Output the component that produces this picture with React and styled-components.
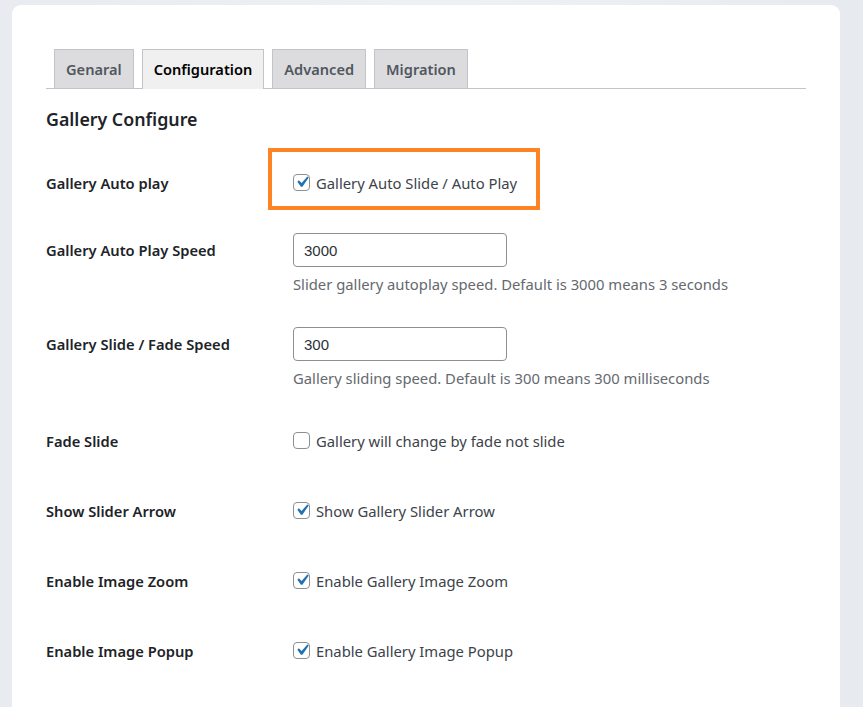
import React from 'react'
import styled, { createGlobalStyle } from 'styled-components'

const GlobalStyle = createGlobalStyle`
  html, body {
    margin: 0;
    padding: 0;
  }
  body {
    background: linear-gradient(90deg, #e8ebef 0%, #eef1f4 50%, #e7ebf0 100%);
    font-family: "Noto Sans", "Open Sans", sans-serif;
    color: #1d2327;
    height: 707px;
    overflow: hidden;
  }
`;

const Card = styled.div`
  margin: 5px 23px 0 12px;
  background: #fff;
  border-radius: 9px 9px 0 0;
  padding: 44px 34px 10px;
  height: 702px;
  box-sizing: border-box;
`;

const TabBar = styled.nav`
  display: flex;
  gap: 8px;
  padding-left: 8px;
  border-bottom: 1px solid #c3c4c7;
`;

const Tab = styled.a`
  display: block;
  padding: 7px 11px 7px;
  font-size: 14.6px;
  font-weight: 600;
  line-height: 24px;
  border: 1px solid #c3c4c7;
  border-bottom: none;
  margin-bottom: ${p => (p.$active ? '-1px' : '0')};
  padding-bottom: ${p => (p.$active ? '8px' : '7px')};
  background: ${p => (p.$active ? '#f0f0f1' : '#dcdcde')};
  color: ${p => (p.$active ? '#000' : '#50575e')};
  cursor: pointer;
`;

const Heading = styled.h2`
  margin: 18px 0 17px;
  font-size: 17.8px;
  font-weight: 600;
  line-height: 24px;
  color: #1d2327;
`;

const Row = styled.div`
  display: grid;
  grid-template-columns: 247px 1fr;
  align-items: start;
  padding: ${p => (p.$input ? '15px 0 18px' : '20px 0')};
`;

const Label = styled.div`
  font-size: 14.7px;
  font-weight: 600;
  color: #1d2327;
  line-height: ${p => (p.$input ? '20px' : '30px')};
  padding-top: ${p => (p.$input ? '7px' : '0')};
`;

const Cell = styled.div`
  position: relative;
`;

const CheckLine = styled.label`
  display: flex;
  align-items: center;
  gap: 6px;
  line-height: 30px;
  font-size: 14.8px;
  color: #3c434a;
`;

const Box = styled.span`
  position: relative;
  flex: none;
  width: 17px;
  height: 17px;
  box-sizing: border-box;
  border: 1px solid #8c8f94;
  border-radius: 4px;
  background: #fff;
  margin-top: -2px;

  svg {
    position: absolute;
    left: -3px;
    top: -4px;
  }
`;

const TextInput = styled.input`
  display: block;
  width: 214px;
  height: 34px;
  box-sizing: border-box;
  border: 1px solid #8c8f94;
  border-radius: 4px;
  padding: 0 10px;
  font-family: "Liberation Sans", Arial, sans-serif;
  font-size: 15px;
  color: #2c3338;
  background: #fff;
  outline: none;
`;

const Description = styled.p`
  margin: 7px 0 0;
  font-size: 14.8px;
  line-height: 20px;
  color: #646970;
`;

const Highlight = styled.div`
  position: absolute;
  left: -25px;
  top: -20px;
  width: 272px;
  height: 62px;
  box-sizing: border-box;
  border: 4px solid #fd8324;
  pointer-events: none;
`;

const Checkbox = ({ checked }) => (
  <Box>
    {checked && (
      <svg width="22" height="22" viewBox="0 0 20 20">
        <path d="M14.83 4.89l1.34.94-5.81 8.38H9.02L5.78 9.67l1.34-1.25 2.57 2.4z" fill="#2271b1" />
      </svg>
    )}
  </Box>
);

const tabs = ['Genaral', 'Configuration', 'Advanced', 'Migration'];

const settings = [
  { label: 'Gallery Auto play', type: 'check', checked: true, text: 'Gallery Auto Slide / Auto Play', highlight: true },
  { label: 'Gallery Auto Play Speed', type: 'input', value: '3000', desc: 'Slider gallery autoplay speed. Default is 3000 means 3 seconds' },
  { label: 'Gallery Slide / Fade Speed', type: 'input', value: '300', desc: 'Gallery sliding speed. Default is 300 means 300 milliseconds' },
  { label: 'Fade Slide', type: 'check', checked: false, text: 'Gallery will change by fade not slide' },
  { label: 'Show Slider Arrow', type: 'check', checked: true, text: 'Show Gallery Slider Arrow' },
  { label: 'Enable Image Zoom', type: 'check', checked: true, text: 'Enable Gallery Image Zoom' },
  { label: 'Enable Image Popup', type: 'check', checked: true, text: 'Enable Gallery Image Popup' },
];

const App = () => {
  return (
    <>
      <GlobalStyle />
      <Card>
        <TabBar>
          {tabs.map((t) => (
            <Tab key={t} $active={t === 'Configuration'}>{t}</Tab>
          ))}
        </TabBar>

        <Heading>Gallery Configure</Heading>

        {settings.map((s) => (
          <Row key={s.label} $input={s.type === 'input'}>
            <Label $input={s.type === 'input'}>{s.label}</Label>
            <Cell>
              {s.type === 'check' ? (
                <CheckLine>
                  <Checkbox checked={s.checked} />
                  {s.text}
                </CheckLine>
              ) : (
                <>
                  <TextInput defaultValue={s.value} />
                  <Description>{s.desc}</Description>
                </>
              )}
              {s.highlight && <Highlight />}
            </Cell>
          </Row>
        ))}
      </Card>
    </>
  );
}

export default App
